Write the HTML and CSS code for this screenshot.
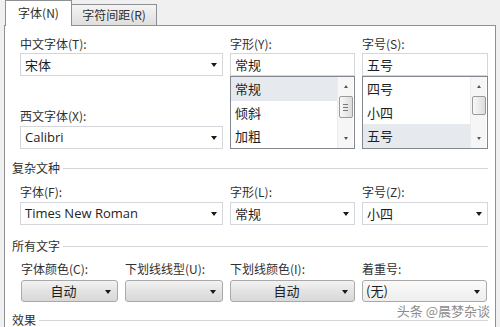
FILE: index.html
```html
<!DOCTYPE html>
<html lang="zh-CN">
<head>
<meta charset="utf-8">
<title>字体</title>
<link rel="stylesheet" href="styles.css">
</head>
<body>
<div class="tabs">
  <div class="tab active">字体(N)</div>
  <div class="tab">字符间距(R)</div>
</div>
<div class="panel">
  <div class="grid3">
    <div class="col">
      <div class="label">中文字体(T):</div>
      <div class="field select"><span class="val">宋体</span><i class="arrow"></i></div>
      <div class="label second">西文字体(X):</div>
      <div class="field select"><span class="val latin">Calibri</span><i class="arrow"></i></div>
    </div>
    <div class="col">
      <div class="label">字形(Y):</div>
      <div class="field">常规</div>
      <div class="listbox">
        <div class="items">
          <div class="item sel">常规</div>
          <div class="item">倾斜</div>
          <div class="item">加粗</div>
        </div>
        <div class="scroll">
          <i class="sarrow up"></i>
          <div class="track"><div class="thumb grip"><span></span><span></span><span></span></div></div>
          <i class="sarrow down"></i>
        </div>
      </div>
    </div>
    <div class="col">
      <div class="label">字号(S):</div>
      <div class="field">五号</div>
      <div class="listbox">
        <div class="items">
          <div class="item">四号</div>
          <div class="item">小四</div>
          <div class="item sel">五号</div>
        </div>
        <div class="scroll">
          <i class="sarrow up"></i>
          <div class="track"><div class="thumb short"></div></div>
          <i class="sarrow down"></i>
        </div>
      </div>
    </div>
  </div>

  <div class="group g1"><span>复杂文种</span><i class="rule"></i></div>

  <div class="grid3">
    <div class="col">
      <div class="label tall">字体(F):</div>
      <div class="field select"><span class="val latin">Times New Roman</span><i class="arrow"></i></div>
    </div>
    <div class="col">
      <div class="label tall">字形(L):</div>
      <div class="field select"><span class="val">常规</span><i class="arrow"></i></div>
    </div>
    <div class="col">
      <div class="label tall">字号(Z):</div>
      <div class="field select"><span class="val">小四</span><i class="arrow"></i></div>
    </div>
  </div>

  <div class="group g2"><span>所有文字</span><i class="rule"></i></div>

  <div class="grid4">
    <div class="col">
      <div class="label">字体颜色(C):</div>
      <div class="btn"><span class="bval">自动</span><i class="arrow"></i></div>
    </div>
    <div class="col">
      <div class="label">下划线线型(U):</div>
      <div class="btn"><span class="bval"></span><i class="arrow"></i></div>
    </div>
    <div class="col">
      <div class="label">下划线颜色(I):</div>
      <div class="btn"><span class="bval">自动</span><i class="arrow"></i></div>
    </div>
    <div class="col">
      <div class="label">着重号:</div>
      <div class="btn combo"><span class="bval left">(无)</span><i class="arrow"></i></div>
    </div>
  </div>

  <div class="group g3"><span>效果</span><i class="rule"></i></div>

  <div class="watermark">头条 @晨梦杂谈</div>
</div>
</body>
</html>
```

FILE: styles.css
```css
html, body {
  margin: 0;
  padding: 0;
  width: 500px;
  height: 327px;
  overflow: hidden;
  background: #f0f0f0;
  font-family: "Noto Sans CJK SC", "Open Sans", sans-serif;
  font-size: 12px;
  color: #333;
}

.tabs {
  display: flex;
  align-items: flex-end;
  height: 25px;
  padding-left: 5px;
  position: relative;
  z-index: 2;
}

.tab {
  box-sizing: border-box;
  height: 21px;
  width: 85px;
  border: 1px solid #8e9096;
  border-left: none;
  border-bottom: none;
  background: linear-gradient(#f4f4f4, #dedede);
  text-align: center;
  line-height: 20px;
  color: #2e2e2e;
}

.tab.active {
  height: 26px;
  width: 67px;
  margin-bottom: -1px;
  border-left: 1px solid #8e9096;
  background: #fff;
  line-height: 24px;
}

.panel {
  position: relative;
  box-sizing: border-box;
  margin-left: 4px;
  width: 492px;
  height: 302px;
  overflow: hidden;
  border: 1px solid #8e9096;
  border-bottom: none;
  background: #fff;
  padding: 9px 7px 0 15px;
}

.grid3 {
  display: grid;
  grid-template-columns: 203px 125px 126px;
  column-gap: 7px;
}

.grid4 {
  display: grid;
  grid-template-columns: 97px 98px 125px 125px;
  column-gap: 7px;
  margin-left: 1px;
}

.col {
  display: flex;
  flex-direction: column;
}

.label {
  line-height: 18px;
  height: 18px;
  color: #303030;
  white-space: nowrap;
}

.label.second {
  margin-top: 30px;
  height: 20px;
  line-height: 20px;
}

.label.tall {
  height: 20px;
  line-height: 20px;
}

.field {
  box-sizing: border-box;
  height: 23px;
  border: 1px solid #d3d6da;
  background: #fff;
  padding-left: 4px;
  font-size: 13px;
  line-height: 21px;
  color: #1e1e1e;
}

.select {
  display: flex;
  align-items: center;
  padding-right: 5px;
}

.val {
  flex: 1;
}

.latin {
  font-family: "Open Sans", "Noto Sans CJK SC", sans-serif;
  font-size: 13px;
}

.arrow {
  width: 0;
  height: 0;
  border-left: 3.5px solid transparent;
  border-right: 3.5px solid transparent;
  border-top: 4px solid #1a1a1a;
  margin-top: 1px;
}

.listbox {
  box-sizing: border-box;
  height: 73px;
  border: 1px solid #828790;
  display: flex;
  background: #fff;
}

.items {
  flex: 1;
  display: flex;
  flex-direction: column;
}

.item {
  flex: 1;
  padding-left: 4px;
  font-size: 13px;
  line-height: 23px;
  color: #1e1e1e;
}

.item.sel {
  background: #e6e9ee;
}

.scroll {
  width: 15px;
  margin-right: 1px;
  background: #f6f6f6;
  border-left: 1px solid #ececec;
  display: flex;
  flex-direction: column;
  align-items: center;
}

.sarrow {
  width: 0;
  height: 0;
  border-left: 2.5px solid transparent;
  border-right: 2.5px solid transparent;
  margin: 8px 0;
}

.sarrow.up {
  border-bottom: 3px solid #555;
}

.sarrow.down {
  border-top: 3px solid #555;
}

.track {
  flex: 1;
  width: 100%;
  display: flex;
  justify-content: center;
}

.thumb {
  box-sizing: border-box;
  width: 14px;
  height: 22px;
  border: 1px solid #9a9a9a;
  border-radius: 2px;
  background: linear-gradient(90deg, #f8f8f8, #dcdcdc);
  display: flex;
  flex-direction: column;
  justify-content: center;
  align-items: center;
  gap: 2px;
}

.thumb.short {
  height: 19px;
}

.thumb span {
  display: block;
  width: 5px;
  height: 1px;
  background: #777;
}

.group {
  display: flex;
  align-items: center;
  margin-left: -8px;
  height: 16px;
  line-height: 16px;
  color: #303030;
}

.group .rule {
  flex: 1;
  height: 1px;
  margin-left: 3px;
  background: #d2d4d7;
}

.g1 {
  margin-top: 11px;
  margin-bottom: 6px;
}

.g2 {
  margin-top: 13px;
  margin-bottom: 6px;
}

.g3 {
  margin-top: 10px;
}

.btn {
  box-sizing: border-box;
  height: 22px;
  margin-top: 2px;
  border: 1px solid #a9a9a9;
  border-radius: 3px;
  background: linear-gradient(#f3f3f3, #e3e3e3 50%, #d8d8d8);
  display: flex;
  align-items: center;
  padding-right: 6px;
  font-size: 13px;
  color: #1e1e1e;
}

.btn.combo {
  background: linear-gradient(#fafafa, #eeeeee);
  padding-left: 3px;
}

.bval {
  flex: 1;
  text-align: center;
  line-height: 20px;
}

.bval.left {
  text-align: left;
}

.watermark {
  position: absolute;
  right: 5px;
  top: 276px;
  font-size: 13px;
  line-height: 18px;
  color: #8c8c8c;
  white-space: nowrap;
}
```
